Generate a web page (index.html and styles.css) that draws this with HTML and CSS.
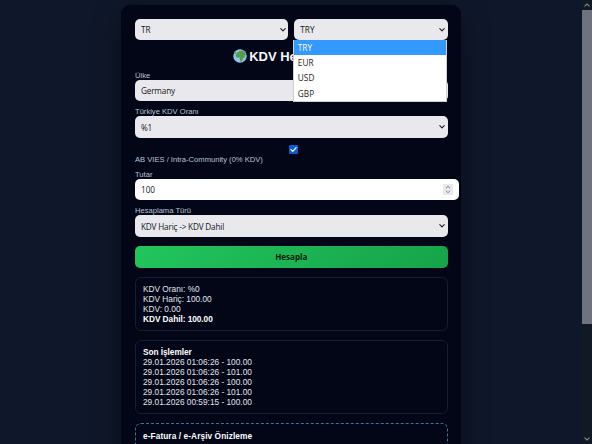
FILE: index.html
```html
<!DOCTYPE html>
<html lang="tr">
<head>
<meta charset="utf-8">
<title>KDV Hesaplama</title>
<meta name="viewport" content="width=device-width,initial-scale=1">
<link rel="stylesheet" href="styles.css">
</head>
<body>

<main class="page">
  <div class="card">
    <div class="top">
      <div class="field">
        <select id="lang"><option>TR</option><option>EN</option></select>
        <svg class="arrow" viewBox="0 0 6 4"><path d="M.8.7 3 2.9 5.2.7"/></svg>
      </div>
      <div class="field">
        <select id="currency"><option>TRY</option><option>EUR</option><option>USD</option><option>GBP</option></select>
        <svg class="arrow" viewBox="0 0 6 4"><path d="M.8.7 3 2.9 5.2.7"/></svg>
        <ul class="options">
          <li class="active">TRY</li>
          <li>EUR</li>
          <li>USD</li>
          <li>GBP</li>
        </ul>
      </div>
    </div>

    <h1>
      <svg class="globe" viewBox="0 0 28 28">
        <circle cx="14" cy="14" r="13.5" fill="#86c8ee"/>
        <path fill="#5c9b45" d="M9 7l4-3 6-1 5 4 2 5-3 1 1 3-4 3-2 5-3 2-1-5-1-4-5 0-3-3 1-4z"/>
        <path fill="#5c9b45" d="M2 9l3-4 2 1-2 4z"/>
      </svg>
      <span>KDV Hesaplama</span>
    </h1>

    <label for="country">Ülke</label>
    <div class="field">
      <select id="country"><option>Germany</option></select>
      <svg class="arrow" viewBox="0 0 6 4"><path d="M.8.7 3 2.9 5.2.7"/></svg>
    </div>

    <label for="rate">Türkiye KDV Oranı</label>
    <div class="field">
      <select id="rate"><option>%1</option><option>%10</option><option>%20</option></select>
      <svg class="arrow" viewBox="0 0 6 4"><path d="M.8.7 3 2.9 5.2.7"/></svg>
    </div>

    <label class="vies">
      <span class="check"><svg viewBox="0 0 9 9"><path d="M2 4.6 3.8 6.4 7.1 2.6"/></svg></span>
      AB VIES / Intra-Community (0% KDV)
    </label>

    <label for="amount">Tutar</label>
    <div class="field wide">
      <input id="amount" type="number" value="100">
      <span class="spin"><svg viewBox="0 0 10 11"><path d="M3.2 4 5 2.3 6.8 4M3.2 7 5 8.7 6.8 7"/></svg></span>
    </div>

    <label for="mode">Hesaplama Türü</label>
    <div class="field">
      <select id="mode"><option>KDV Hariç -&gt; KDV Dahil</option><option>KDV Dahil -&gt; KDV Hariç</option></select>
      <svg class="arrow" viewBox="0 0 6 4"><path d="M.8.7 3 2.9 5.2.7"/></svg>
    </div>

    <button>Hesapla</button>

    <div class="box">
      <p>KDV Oranı: %0</p>
      <p>KDV Hariç: 100.00</p>
      <p>KDV: 0.00</p>
      <p><strong>KDV Dahil: 100.00</strong></p>
    </div>

    <div class="box">
      <p><strong>Son İşlemler</strong></p>
      <p>29.01.2026 01:06:26 - 100.00</p>
      <p>29.01.2026 01:06:26 - 101.00</p>
      <p>29.01.2026 01:06:26 - 100.00</p>
      <p>29.01.2026 01:06:26 - 101.00</p>
      <p>29.01.2026 00:59:15 - 100.00</p>
    </div>

    <div class="box invoice">
      <p><strong>e-Fatura / e-Arşiv Önizleme</strong></p>
    </div>
  </div>
</main>

<div class="scrollbar">
  <svg viewBox="0 0 6 4"><path d="M.8 3.2 3 1 5.2 3.2"/></svg>
  <div class="thumb"></div>
  <svg viewBox="0 0 6 4"><path d="M.8.8 3 3 5.2.8"/></svg>
</div>

</body>
</html>
```
FILE: styles.css
```css
/* Reset & Base */
*,*::before,*::after{box-sizing:border-box;margin:0;padding:0}
body{
  font-family:"Liberation Sans",Arial,sans-serif;
  font-size:8.3px;line-height:9.9px;
  background:#0f172a;
  color:#e2e5ea;
  display:flex;
  height:100vh;overflow:hidden;
}
.page{flex:1;display:flex;justify-content:center;padding-top:5px;height:100vh;overflow:hidden}
.card{
  width:340px;height:600px;flex:none;
  padding:13.5px 13.5px 13.5px 14px;
  background:#020617;
  border-radius:9px;
  box-shadow:0 12px 30px rgba(0,0,0,.4);
}
/* Fields */
.top{display:grid;grid-template-columns:1fr 1fr;gap:6px}
.field{position:relative}
.field.wide{width:324px}
select,input{
  display:block;width:100%;height:21.5px;
  appearance:none;
  border:0;border-radius:5px;
  padding:1px 6px 0;
  background:#e9e9ed;color:#15151a;
  font:8.2px "Open Sans",sans-serif;
  letter-spacing:-.18px;
}
#lang,#currency{letter-spacing:.1px}
input{background:#fff;appearance:textfield;letter-spacing:0}
input::-webkit-inner-spin-button{appearance:none}
.arrow{position:absolute;right:2.5px;top:9px;width:6px;height:4px}
svg path{stroke-linecap:round;stroke-linejoin:round}
.arrow path{fill:none;stroke:#222;stroke-width:1.1}
.spin{position:absolute;right:6px;top:5px;width:10px;height:11px;background:#e9e9ed}
.spin svg{display:block}
.spin path{fill:none;stroke:#777;stroke-width:.9}
label{display:block;height:9px;margin-top:6px;font-size:7.6px;line-height:9px;color:#b9c3d6}
/* Currency list */
.options{
  position:absolute;left:-1px;top:21.5px;z-index:2;width:154px;
  list-style:none;background:#fff;color:#222;
  border:1px solid #cfcfd4;border-top:0;
  font:8.2px/16.4px "Open Sans",sans-serif;
  letter-spacing:.1px;
}
.options li{padding-left:3.5px;height:15.2px}
.options .active{background:#3399ff;color:#fff}
/* Title */
h1{
  display:flex;justify-content:center;align-items:center;gap:2.5px;
  height:17px;margin:7.5px 1px 0 0;
  font-size:13px;line-height:17px;color:#f5f6f8;
}
.globe{width:14px;height:14px}
/* VIES checkbox */
.vies{height:auto;margin-top:7px}
.check{display:block;width:9px;height:9px;margin:0 auto 1px 154px;background:#0b5bd3;border-radius:1px}
.check svg{display:block}
.check path{fill:none;stroke:#fff;stroke-width:1.3}
button{
  display:block;width:100%;height:21.5px;margin-top:9.5px;
  border:0;border-radius:5px;
  background:linear-gradient(135deg,#22c55e,#16a34a);
  color:#03210f;
  font:bold 8px "Open Sans",sans-serif;
}
/* Result boxes */
.box{margin-top:9.2px;padding:7.1px 7px 5.4px;border:1px solid #161e2f;border-radius:6px}
.box strong{color:#fff;letter-spacing:-.05px}
.invoice{border:1px dashed #3f7592;height:120px;padding-top:7.5px}
.invoice strong{letter-spacing:.08px}
/* Scrollbar */
.scrollbar{
  width:10px;height:100vh;flex:none;
  display:flex;flex-direction:column;align-items:center;
  background:#111923;
}
.scrollbar svg{width:6px;height:4px;margin:3px 0}
.scrollbar path{fill:none;stroke:#82858c;stroke-width:1.1}
.thumb{width:10px;height:314px;margin-bottom:auto;background:#70727f}
```
